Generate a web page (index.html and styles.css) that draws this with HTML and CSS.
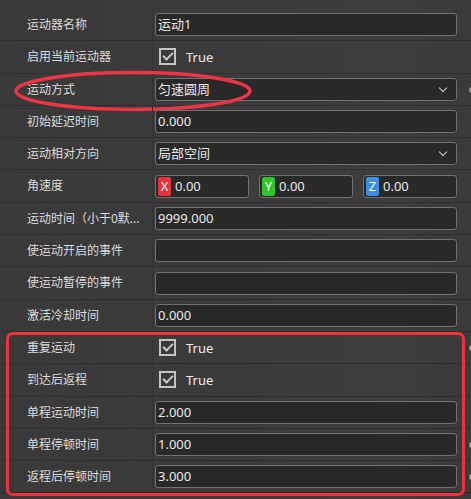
FILE: index.html
```html
<!DOCTYPE html>
<html lang="zh-CN">
<head>
  <meta charset="UTF-8" />
  <title>运动器属性</title>
  <meta name="viewport" content="width=device-width, initial-scale=1.0" />
  <link rel="stylesheet" href="styles.css">
</head>
<body>

<div class="inspector">
  <div class="row">
    <div class="label">运动器名称</div>
    <div class="value"><div class="field">运动1</div></div>
    <div class="gutter"></div>
  </div>
  <div class="row">
    <div class="label">启用当前运动器</div>
    <div class="value"><span class="check"></span><span class="check-text">True</span></div>
    <div class="gutter"></div>
  </div>
  <div class="row">
    <div class="label">运动方式</div>
    <div class="value"><div class="field select">匀速圆周</div></div>
    <div class="gutter"><span class="reset"></span></div>
    <svg class="ring" width="250" height="44" viewBox="0 0 250 44">
      <ellipse cx="122" cy="22" rx="117" ry="18.5" />
    </svg>
  </div>
  <div class="row">
    <div class="label">初始延迟时间</div>
    <div class="value"><div class="field">0.000</div></div>
    <div class="gutter"></div>
  </div>
  <div class="row">
    <div class="label">运动相对方向</div>
    <div class="value"><div class="field select">局部空间</div></div>
    <div class="gutter"></div>
  </div>
  <div class="row">
    <div class="label">角速度</div>
    <div class="value vector">
      <div class="field axis"><span class="badge x">X</span>0.00</div>
      <div class="field axis"><span class="badge y">Y</span>0.00</div>
      <div class="field axis"><span class="badge z">Z</span>0.00</div>
    </div>
    <div class="gutter"></div>
  </div>
  <div class="row">
    <div class="label">运动时间（小于0默...</div>
    <div class="value"><div class="field">9999.000</div></div>
    <div class="gutter"></div>
  </div>
  <div class="row">
    <div class="label">使运动开启的事件</div>
    <div class="value"><div class="field"></div></div>
    <div class="gutter"></div>
  </div>
  <div class="row">
    <div class="label">使运动暂停的事件</div>
    <div class="value"><div class="field"></div></div>
    <div class="gutter"></div>
  </div>
  <div class="row">
    <div class="label">激活冷却时间</div>
    <div class="value"><div class="field">0.000</div></div>
    <div class="gutter"></div>
  </div>

  <!-- round trip settings -->
  <div class="group">
    <div class="row">
      <div class="label">重复运动</div>
      <div class="value"><span class="check"></span><span class="check-text">True</span></div>
      <div class="gutter"><span class="reset"></span></div>
    </div>
    <div class="row">
      <div class="label">到达后返程</div>
      <div class="value"><span class="check"></span><span class="check-text">True</span></div>
      <div class="gutter"></div>
    </div>
    <div class="row">
      <div class="label">单程运动时间</div>
      <div class="value"><div class="field">2.000</div></div>
      <div class="gutter"></div>
    </div>
    <div class="row">
      <div class="label">单程停顿时间</div>
      <div class="value"><div class="field">1.000</div></div>
      <div class="gutter"><span class="reset"></span></div>
    </div>
    <div class="row">
      <div class="label">返程后停顿时间</div>
      <div class="value"><div class="field">3.000</div></div>
      <div class="gutter"><span class="reset"></span></div>
    </div>
  </div>
</div>

</body>
</html>
```

FILE: styles.css
```css
* { margin: 0; padding: 0; box-sizing: border-box; }

body {
  background: #393939;
  font-family: "Noto Sans", "Noto Sans CJK SC", sans-serif;
  color: #e4e4e4;
  width: 471px;
  height: 499px;
  overflow: hidden;
}

.inspector {
  padding-top: 9px;
  background: linear-gradient(to right, #393939, #3d3d3d 85%, #3a3a3a);
  height: 100%;
}

.row {
  position: relative;
  display: grid;
  grid-template-columns: 153px 1fr 14px;
  height: 32.3px;
  border-bottom: 1px solid #2f2f2f;
}

.label {
  padding-left: 27px;
  font-size: 12px;
  line-height: 31px;
  color: #dcdcdc;
  white-space: nowrap;
  overflow: hidden;
  border-right: 1px solid #333;
}

.value {
  display: flex;
  align-items: center;
  padding-left: 2px;
}

.field {
  position: relative;
  flex: 1;
  height: 23px;
  border: 1px solid #717171;
  border-radius: 3px;
  background: #292929;
  padding-left: 2px;
  font-size: 13px;
  line-height: 21px;
  color: #e8e8e8;
  white-space: nowrap;
}

.select::after {
  content: "";
  position: absolute;
  right: 10px;
  top: 6px;
  width: 5px;
  height: 5px;
  border-right: 1.6px solid #cfcfcf;
  border-bottom: 1.6px solid #cfcfcf;
  transform: rotate(45deg);
}

.vector {
  gap: 10px;
}

.axis {
  display: flex;
  align-items: center;
  gap: 4px;
  padding-left: 2px;
}

.badge {
  width: 13px;
  height: 19px;
  border-radius: 2px;
  color: #fff;
  font-size: 13px;
  line-height: 19px;
  text-align: center;
}

.badge.x { background: #e5323b; }
.badge.y { background: #2fc42c; }
.badge.z { background: #3a8fe3; }

.check {
  position: relative;
  width: 17px;
  height: 17px;
  margin-left: 4px;
  border: 2px solid #c4c4c4;
  background: #3a3a3a;
}

.check::after {
  content: "";
  position: absolute;
  left: 4px;
  top: 0px;
  width: 4px;
  height: 8px;
  border-right: 2px solid #c8c8c8;
  border-bottom: 2px solid #c8c8c8;
  transform: rotate(45deg);
}

.check-text {
  margin-left: 10px;
  font-size: 13px;
  color: #ececec;
}

.gutter {
  position: relative;
  overflow: hidden;
}

.reset {
  position: absolute;
  left: 12px;
  top: 13px;
  width: 6px;
  height: 6px;
  border-radius: 50%;
  background: #9a9a9a;
}

/* hand-drawn highlight marks */
.ring {
  position: absolute;
  left: 11px;
  top: -5px;
  fill: none;
  stroke: #ee3446;
  stroke-width: 3.5;
  pointer-events: none;
}

.group {
  position: relative;
}

.group::after {
  content: "";
  position: absolute;
  left: 6px;
  right: 6px;
  top: 0;
  bottom: -3px;
  border: 3px solid #f0323f;
  border-radius: 7px;
  pointer-events: none;
}
```
